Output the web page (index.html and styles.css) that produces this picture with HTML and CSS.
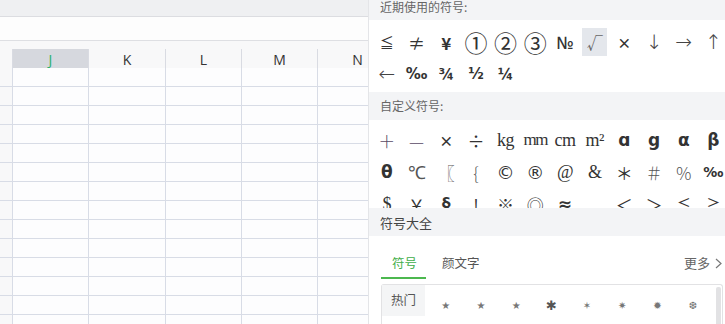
FILE: index.html
```html
<!DOCTYPE html>
<html lang="zh">
<head>
<meta charset="utf-8">
<link rel="stylesheet" href="styles.css">
</head>
<body>
<div class="app">
  <div class="sheet">
    <div class="toolbar"></div>
    <div class="formula"></div>
    <div class="gap"></div>
    <div class="grid">
      <div class="hc rh"></div>
      <div class="hc sel">J</div>
      <div class="hc">K</div>
      <div class="hc">L</div>
      <div class="hc">M</div>
      <div class="hc">N</div>
      <div class="c rh"></div><div class="c"></div><div class="c"></div><div class="c"></div><div class="c"></div><div class="c"></div>
      <div class="c rh"></div><div class="c"></div><div class="c"></div><div class="c"></div><div class="c"></div><div class="c"></div>
      <div class="c rh"></div><div class="c"></div><div class="c"></div><div class="c"></div><div class="c"></div><div class="c"></div>
      <div class="c rh"></div><div class="c"></div><div class="c"></div><div class="c"></div><div class="c"></div><div class="c"></div>
      <div class="c rh"></div><div class="c"></div><div class="c"></div><div class="c"></div><div class="c"></div><div class="c"></div>
      <div class="c rh"></div><div class="c"></div><div class="c"></div><div class="c"></div><div class="c"></div><div class="c"></div>
      <div class="c rh"></div><div class="c"></div><div class="c"></div><div class="c"></div><div class="c"></div><div class="c"></div>
      <div class="c rh"></div><div class="c"></div><div class="c"></div><div class="c"></div><div class="c"></div><div class="c"></div>
      <div class="c rh"></div><div class="c"></div><div class="c"></div><div class="c"></div><div class="c"></div><div class="c"></div>
      <div class="c rh"></div><div class="c"></div><div class="c"></div><div class="c"></div><div class="c"></div><div class="c"></div>
      <div class="c rh"></div><div class="c"></div><div class="c"></div><div class="c"></div><div class="c"></div><div class="c"></div>
      <div class="c rh"></div><div class="c"></div><div class="c"></div><div class="c"></div><div class="c"></div><div class="c"></div>
      <div class="c rh"></div><div class="c"></div><div class="c"></div><div class="c"></div><div class="c"></div><div class="c"></div>
      <div class="c rh"></div><div class="c"></div><div class="c"></div><div class="c"></div><div class="c"></div><div class="c"></div>
    </div>
  </div>

  <div class="panel">
    <div class="sec-head first">近期使用的符号:</div>
    <div class="syms recent">
      <span class="s le">≦</span>
      <span class="s">≠</span>
      <span class="s yen">¥</span>
      <span class="s circ">①</span>
      <span class="s circ">②</span>
      <span class="s circ">③</span>
      <span class="s no">№</span>
      <span class="s"><span class="hl">√</span></span>
      <span class="s small">×</span>
      <span class="s arrow">↓</span>
      <span class="s arrow">→</span>
      <span class="s arrow">↑</span>
      <span class="s arrow">←</span>
      <span class="s frac">‰</span>
      <span class="s frac">¾</span>
      <span class="s frac">½</span>
      <span class="s frac">¼</span>
    </div>

    <div class="sec-head">自定义符号:</div>
    <div class="syms custom">
      <span class="s thin">＋</span>
      <span class="s thin">—</span>
      <span class="s small">×</span>
      <span class="s">÷</span>
      <span class="s serif">kg</span>
      <span class="s serif narrow">mm</span>
      <span class="s serif">cm</span>
      <span class="s serif">m²</span>
      <span class="s bold">ɑ</span>
      <span class="s bold">g</span>
      <span class="s bold">α</span>
      <span class="s bold">β</span>
      <span class="s bold">θ</span>
      <span class="s serif light">℃</span>
      <span class="s light">〖</span>
      <span class="s light">{</span>
      <span class="s circled">©</span>
      <span class="s circled">®</span>
      <span class="s serif">@</span>
      <span class="s serif">&amp;</span>
      <span class="s">＊</span>
      <span class="s light">＃</span>
      <span class="s light">％</span>
      <span class="s bold frac">‰</span>
      <span class="s serif">$</span>
      <span class="s">￥</span>
      <span class="s bold">§</span>
      <span class="s">!</span>
      <span class="s">※</span>
      <span class="s">◎</span>
      <span class="s bold">≈</span>
      <span class="s"></span>
      <span class="s">＜</span>
      <span class="s">＞</span>
      <span class="s le">≦</span>
      <span class="s le">≧</span>
    </div>

    <div class="sec-head big">符号大全</div>
    <div class="tabs">
      <span class="tab active">符号</span>
      <span class="tab">颜文字</span>
      <span class="more">更多 <svg class="chev" width="7" height="11" viewBox="0 0 7 11"><path d="M1 1 L6 5.5 L1 10" fill="none" stroke="#777" stroke-width="1.2"/></svg></span>
    </div>
    <div class="box">
      <div class="side">
        <div class="side-item">热门</div>
        <div class="side-item plain">箭头</div>
      </div>
      <div class="stars">
        <span class="st">★</span>
        <span class="st">★</span>
        <span class="st">★</span>
        <span class="st big">✱</span>
        <span class="st">✶</span>
        <span class="st">✷</span>
        <span class="st">✹</span>
        <span class="st">❆</span>
      </div>
      <div class="scroll"></div>
    </div>
  </div>
</div>
</body>
</html>
```

FILE: styles.css
```css
* { box-sizing: border-box; }
html, body { margin: 0; padding: 0; }
body {
  width: 725px;
  height: 324px;
  overflow: hidden;
  background: #fff;
  font-family: "Noto Sans CJK SC", "Noto Sans", sans-serif;
  color: #333;
}
.app {
  display: flex;
  height: 324px;
}

/* ---------- spreadsheet ---------- */
.sheet {
  width: 368px;
  flex: none;
  overflow: hidden;
  background: #fdfdfe;
}
.toolbar {
  height: 17px;
  background: #eff0f2;
  border-bottom: 1px solid #dcdde1;
}
.formula {
  height: 24px;
  background: #fdfdfd;
  border-bottom: 1px solid #dedfe3;
}
.gap {
  height: 8px;
  background: #f8f8f9;
}
.grid {
  display: grid;
  grid-template-columns: 13px 76px 77px 76px 76px 80px;
  grid-auto-rows: 19px;
}
.grid .hc {
  height: 24px;
  background: #f8f8f9;
  border-right: 1px solid #d9dbe2;
  border-bottom: 1px solid #d9dbe2;
  font-family: "Open Sans", "Noto Sans", sans-serif;
  font-size: 14px;
  line-height: 22px;
  text-align: center;
  color: #333;
}
.grid .hc.sel {
  background: #d6d8de;
  color: #2bb06b;
  border-bottom: 2px solid #26b36a;
}
.grid .c {
  border-right: 1px solid #d8dce6;
  border-bottom: 1px solid #d8dce6;
  background: #fdfdfe;
}
.grid .c.rh, .grid .hc.rh {
  background: #f8f8f9;
}

/* ---------- symbol panel ---------- */
.panel {
  flex: 1;
  border-left: 1px solid #e4e5e8;
  background: #fff;
  overflow: hidden;
  display: flex;
  flex-direction: column;
}
.sec-head {
  height: 28px;
  background: #f3f4f6;
  font-size: 12px;
  line-height: 28px;
  color: #666;
  padding-left: 11px;
  flex: none;
}
.sec-head.first {
  height: 20px;
  line-height: 14px;
}
.sec-head.big {
  font-size: 13px;
  color: #444;
  line-height: 30px;
}
.syms {
  display: grid;
  grid-template-columns: repeat(12, 29.7px);
  grid-auto-rows: 32px;
  padding-left: 3px;
  flex: none;
}
.syms.recent {
  padding-top: 6px;
  height: 72px;
}
.syms.custom {
  padding-top: 4px;
  height: 88px;
  overflow: hidden;
}
.s {
  display: flex;
  align-items: center;
  justify-content: center;
  font-size: 17px;
  color: #333;
  white-space: nowrap;
}
.s.le { font-size: 14px; }
.s.circ { font-size: 23px; }
.s.no { font-size: 17px; font-family: "Noto Sans", sans-serif; font-weight: 500; }
.s.yen { font-weight: bold; }
.s.small { font-size: 14px; font-weight: bold; }
.s.arrow { font-size: 20px; font-family: "DejaVu Sans", sans-serif; font-weight: 300; color: #444; }
.s.frac { font-size: 15px; font-family: "DejaVu Sans", sans-serif; font-weight: bold; }
.s.serif { font-family: "Liberation Serif", serif; font-size: 18px; letter-spacing: -0.5px; }
.s.serif.narrow { letter-spacing: -1.5px; font-size: 17px; }
.s.bold { font-weight: bold; font-family: "DejaVu Sans", sans-serif; font-size: 17px; }
.s.bold.frac { font-size: 14px; }
.s.thin { font-weight: 300; color: #5a4a66; }
.s.light { color: #555; font-weight: 300; }
.s.circled { font-family: "DejaVu Sans", sans-serif; font-size: 18px; }
.hl {
  display: flex;
  align-items: center;
  justify-content: center;
  width: 25px;
  height: 28px;
  background: #e4e7ec;
  color: #666;
  font-size: 16px;
}

.tabs {
  height: 48px;
  flex: none;
  display: flex;
  align-items: flex-start;
  padding-left: 12px;
  padding-top: 18px;
}
.tab {
  font-size: 12.5px;
  color: #555;
  line-height: 18px;
  height: 25px;
  padding: 0 9px 0 11px;
  margin-right: 5px;
}
.tab.active {
  color: #3fae49;
  border-bottom: 2px solid #4cb84f;
}
.more {
  margin-left: auto;
  margin-right: 3px;
  font-size: 13px;
  color: #666;
  line-height: 18px;
  display: flex;
  align-items: center;
  gap: 5px;
}
.box {
  flex: 1;
  margin-left: 12px;
  margin-right: 2px;
  border: 1px solid #e2e2e4;
  border-bottom: none;
  border-radius: 3px 3px 0 0;
  display: flex;
}
.side {
  width: 43px;
  flex: none;
  display: flex;
  flex-direction: column;
}
.side-item {
  height: 31px;
  background: #f4f5f6;
  font-size: 12.5px;
  color: #555;
  text-align: center;
  line-height: 30px;
}
.side-item.plain {
  background: #fff;
  color: #777;
}
.stars {
  flex: 1;
  display: grid;
  grid-template-columns: repeat(8, 35.3px);
  grid-auto-rows: 40px;
  padding-left: 3px;
}
.st {
  display: flex;
  align-items: center;
  justify-content: center;
  font-family: "DejaVu Sans", sans-serif;
  font-size: 10px;
  color: #777;
}
.st.big { font-size: 13px; color: #555; }
.scroll {
  width: 5px;
  margin: 2px 1px 0 0;
  background: #e2e2e4;
  border-radius: 2px;
  flex: none;
}
```
